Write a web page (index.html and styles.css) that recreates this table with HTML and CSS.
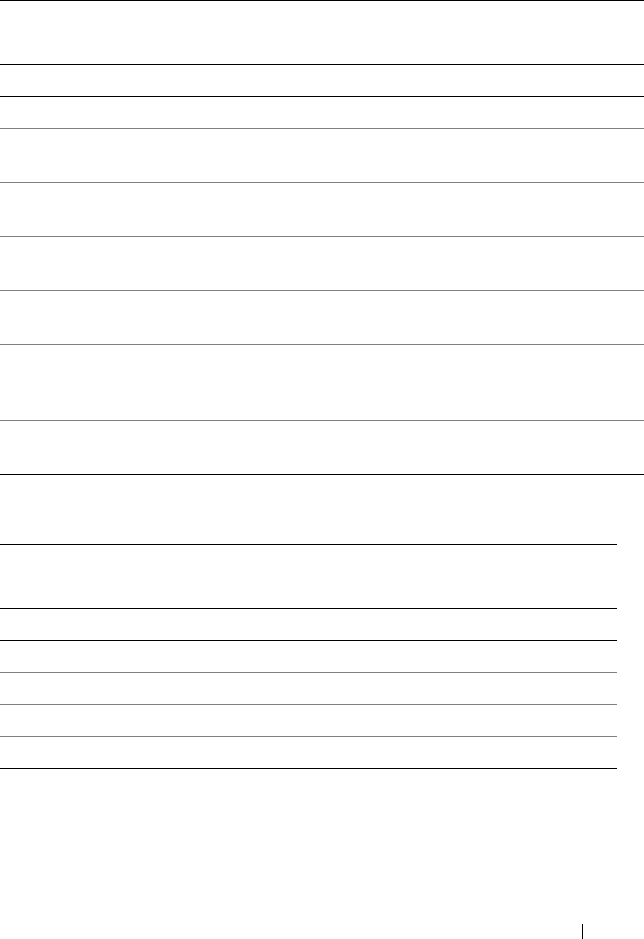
FILE: index.html
```html
<!DOCTYPE html>
<html lang="en">
<head>
<meta charset="utf-8">
<title>Page</title>
<link rel="stylesheet" href="styles.css">
</head>
<body>
<div class="page">
  <div class="table table-wide">
    <div class="row h63 dark"></div>
    <div class="row h31 dark"></div>
    <div class="row h31"></div>
    <div class="row h53"></div>
    <div class="row h53"></div>
    <div class="row h53"></div>
    <div class="row h53"></div>
    <div class="row h75"></div>
    <div class="row h53 dark"></div>
  </div>
  <div class="table table-narrow">
    <div class="row h63 dark"></div>
    <div class="row h31 dark"></div>
    <div class="row h31"></div>
    <div class="row h31"></div>
    <div class="row h31"></div>
    <div class="row h31 dark"></div>
  </div>
  <div class="footer">
    <span class="footer-bar"></span>
  </div>
</div>
</body>
</html>
```
FILE: styles.css
```css
html, body {
  margin: 0;
  padding: 0;
  background: #ffffff;
  font-family: "Liberation Sans", Arial, sans-serif;
}
.page {
  width: 644px;
  height: 939px;
  display: flex;
  flex-direction: column;
  overflow: hidden;
}
.table {
  display: flex;
  flex-direction: column;
  border-top: 1px solid #000000;
}
.table-wide {
  width: 644px;
}
.table-narrow {
  width: 617px;
  margin-top: 69px;
}
.row {
  border-bottom: 1px solid #808080;
}
.row.dark {
  border-bottom-color: #000000;
}
.h31 { height: 31px; }
.h53 { height: 53px; }
.h63 { height: 63px; }
.h75 { height: 75px; }
.footer {
  margin-top: 155px;
  display: flex;
  justify-content: flex-end;
  padding-right: 61px;
}
.footer-bar {
  display: block;
  width: 1px;
  height: 15px;
  background: #000000;
}
```
